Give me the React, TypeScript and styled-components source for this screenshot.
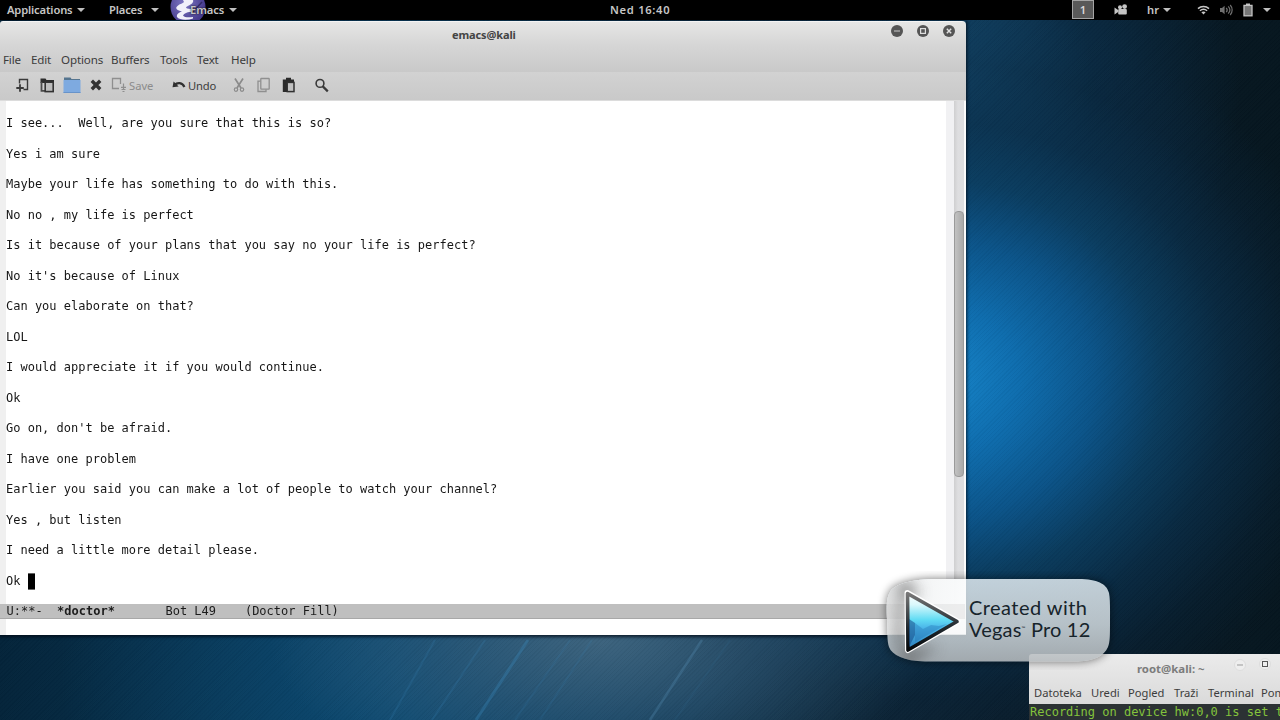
import React from "react";
import styled, { createGlobalStyle } from "styled-components";

const Global = createGlobalStyle`
  * { box-sizing: border-box; }
  body { margin: 0; background: #000; overflow: hidden; }
`;

const UI = `"Noto Sans", "Open Sans", sans-serif`;
const MONO = `"DejaVu Sans Mono", "Liberation Mono", monospace`;

const Screen = styled.div`
  display: flex;
  flex-direction: column;
  width: 1280px;
  height: 720px;
  overflow: hidden;
  font-family: ${UI};
`;

const Slot = styled.span<{ $w: number; $ls?: number }>`
  display: flex;
  flex: none;
  align-items: center;
  width: ${(p) => p.$w}px;
  letter-spacing: ${(p) => p.$ls ?? 0}px;
  white-space: nowrap;
`;

/* ---------- top panel ---------- */
const TopBar = styled.header`
  display: flex;
  flex: none;
  align-items: center;
  height: 20px;
  padding-left: 7px;
  background: #000;
  color: #c6c6c6;
  font-size: 11.2px;
  font-weight: 600;
  line-height: 20px;
`;

const Arrow = styled.i`
  display: block;
  width: 0;
  height: 0;
  margin-bottom: 1px;
  border: 4px solid transparent;
  border-top: 4.5px solid #c0c0c0;
  border-bottom: 0;
`;

const Workspace = styled.span`
  display: grid;
  place-items: center;
  width: 22px;
  height: 19px;
  margin-bottom: 1px;
  border: 1px solid #a5a5a5;
  background: #595959;
  color: #d8d8d8;
  line-height: 16px;
`;

const LogoBox = styled.span`
  flex: none;
  width: 20px;
  height: 20px;
  svg { display: block; overflow: hidden; }
`;

const AppName = styled(Slot)`
  position: relative;
  text-shadow: 0 0 2px #000;
`;

/* ---------- desktop ---------- */
const Desktop = styled.main`
  position: relative;
  flex: 1;
  overflow: hidden;
  background:
    repeating-linear-gradient(135deg, rgba(0, 8, 20, 0.035) 0 1px, rgba(255, 255, 255, 0.006) 1px 3px),
    radial-gradient(ellipse 330px 150px at 600px 620px, rgba(66, 104, 130, 0.9), rgba(50, 92, 122, 0.6) 50%, rgba(40, 85, 115, 0) 100%),
    radial-gradient(ellipse 340px 300px at 400px 650px, rgba(12, 84, 128, 0.6), rgba(8, 70, 112, 0) 100%),
    radial-gradient(ellipse 420px 370px at 935px 360px, #1685ca 0%, #0e6dae 20%, #0b5489 38%, rgba(10, 62, 98, 0.92) 54%, rgba(9, 46, 74, 0.75) 70%, rgba(8, 36, 58, 0.42) 86%, rgba(6, 24, 38, 0) 100%),
    radial-gradient(ellipse 290px 280px at 950px 70px, rgba(20, 82, 124, 0.95), rgba(10, 54, 88, 0.55) 50%, rgba(6, 30, 50, 0) 100%),
    linear-gradient(90deg, #04243a 0, #083452 240px, #0a3f62 400px, #0e2638 850px, #0a1c2a 1000px, #06161f 1280px);
`;

const Rays = styled.svg`
  position: absolute;
  left: 380px;
  top: 615px;
`;

const Window = styled.section<{ $x: number; $y: number; $w: number; $h: number }>`
  position: absolute;
  left: ${(p) => p.$x}px;
  top: ${(p) => p.$y}px;
  display: flex;
  flex-direction: column;
  width: ${(p) => p.$w}px;
  height: ${(p) => p.$h}px;
  overflow: hidden;
  border-radius: 3px 4px 0 0;
`;

const Shade = styled.div`
  position: absolute;
  left: 0;
  top: 1px;
  width: 966px;
  height: 614px;
  box-shadow: 0 1px 3px 1px rgba(0, 10, 20, 0.75);
`;

const WindowHead = styled.div`
  flex: none;
  height: 51px;
  border-top: 1px solid #f4f4f4;
  background: linear-gradient(#e6e6e5, #d6d6d6 45%, #c9c9c9);
`;

const TitleRow = styled.div`
  display: grid;
  grid-template-columns: 1fr auto;
  height: 28px;
`;

const Title = styled.h1`
  margin: 0;
  padding: 3px 0 0 452px;
  color: #444;
  font-size: 11px;
  font-weight: 700;
  letter-spacing: -0.12px;
  line-height: 20px;
`;

const Controls = styled.div`
  display: flex;
  gap: 14px;
  padding: 3px 11px 0 0;
  svg { display: block; }
`;

const MenuRow = styled.nav`
  display: flex;
  height: 20px;
  padding-left: 3px;
  color: #3c3c3c;
  font-size: 11.6px;
  line-height: 20px;
`;

const ToolBar = styled.div`
  display: flex;
  flex: none;
  align-items: center;
  height: 29px;
  padding: 0 0 2px 14px;
  border-bottom: 1px solid #dcdcdc;
  background: linear-gradient(#d2d2d2, #c9c9c9);
  font-size: 11.2px;
  color: #3c3c3c;
  svg { display: block; flex: none; }
`;

const Muted = styled.span`
  color: #8b8b8b;
`;

const Body = styled.div`
  display: flex;
  flex: none;
  height: 503px;
  background: #fff;
`;

const LeftFringe = styled.div`
  width: 6px;
  background: #f0f0f0;
`;

const Buffer = styled.div`
  flex: 1;
  padding-top: 15px;
  background: #fff;
`;

const Line = styled.p`
  display: flex;
  margin: 0 0 15.26px;
  height: 15.27px;
  color: #161616;
  font: 12px/15.27px ${MONO};
  white-space: pre;
  transform: scaleY(1.08);
`;

const Cursor = styled.span`
  width: 7px;
  height: 14.5px;
  background: #000;
`;

const RightFringe = styled.div`
  width: 8px;
  background: #f1f1f3;
`;

const ScrollTrack = styled.div`
  width: 10px;
  padding-top: 110px;
  background: linear-gradient(90deg, #cfcfd0, #dedee0 40%, #dcdcde);
`;

const ScrollThumb = styled.div`
  height: 266px;
  border: 1px solid #9a9a9a;
  border-radius: 4px;
  background: linear-gradient(90deg, #c2c2c2, #a9a9a9);
`;

const WindowEdge = styled.div`
  width: 2px;
  background: #fafafa;
`;

const ModeLine = styled.div`
  display: flex;
  flex: none;
  height: 15px;
  padding-left: 6.5px;
  border-bottom: 1px solid #a8a8a8;
  background: #bfbfbf;
  color: #1c1c1c;
  font: 12px/15px ${MONO};
  white-space: pre;
`;

const ModeText = styled.span`
  height: 14px;
  transform: scaleY(1.08);
`;

const EchoArea = styled.div`
  flex: 1;
  border-left: 6px solid #f0f0f0;
  background: #fff;
`;

/* ---------- terminal ---------- */
const TermHead = styled.div`
  flex: none;
  height: 50px;
  background: linear-gradient(#ebebeb, #dadada);
`;

const TermTitle = styled.div`
  display: flex;
  height: 28px;
  padding-left: 108px;
  color: #7c7c7c;
  font-size: 11.4px;
  font-weight: 700;
  line-height: 27px;
`;

const TermMenu = styled.nav`
  display: flex;
  height: 22px;
  padding-left: 5px;
  color: #3c3c3c;
  font-size: 11.2px;
  line-height: 22px;
`;

const TermBody = styled.div`
  flex: 1;
  padding-left: 1px;
  background: #2c3234;
  color: #84c43c;
  font: 12px/16px ${MONO};
  white-space: pre;
`;

/* ---------- watermark ---------- */
const Watermark = styled.aside`
  position: absolute;
  left: 867px;
  top: 539px;
  width: 263px;
  height: 123px;
`;

const WatermarkArt = styled.svg`
  position: absolute;
  inset: 0;
`;

const WatermarkText = styled.div`
  position: relative;
  display: flex;
  flex-direction: column;
  padding: 37px 0 0 102px;
  color: #17242b;
  font: 400 20px/22px Lato, sans-serif;
  white-space: nowrap;
`;

const WatermarkLine = styled.span<{ $ls: number }>`
  letter-spacing: ${(p) => p.$ls}px;
`;

const Trademark = styled.sup`
  font-size: 5px;
  line-height: 0;
  vertical-align: 7px;
`;

const chat = [
  "I see...  Well, are you sure that this is so?",
  "Yes i am sure",
  "Maybe your life has something to do with this.",
  "No no , my life is perfect",
  "Is it because of your plans that you say no your life is perfect?",
  "No it's because of Linux",
  "Can you elaborate on that?",
  "LOL",
  "I would appreciate it if you would continue.",
  "Ok",
  "Go on, don't be afraid.",
  "I have one problem",
  "Earlier you said you can make a lot of people to watch your channel?",
  "Yes , but listen",
  "I need a little more detail please.",
];

const menus: [string, number][] = [
  ["File", 28], ["Edit", 30], ["Options", 50], ["Buffers", 49],
  ["Tools", 37], ["Text", 34], ["Help", 30],
];

const termMenus: [string, number][] = [
  ["Datoteka", 57], ["Uredi", 37], ["Pogled", 46], ["Traži", 34], ["Terminal", 53], ["Pomoć", 40],
];

const EmacsLogo = () => (
  <svg width="36" height="20" viewBox="0 0 36 20">
    <defs>
      <radialGradient id="em" cx="0.4" cy="0.4" r="0.6">
        <stop offset="0" stopColor="#7f78c4" />
        <stop offset="1" stopColor="#453a8c" />
      </radialGradient>
    </defs>
    <circle cx="18" cy="7" r="17.5" fill="url(#em)" />
    <path d="M13 0h10c1 3-2 4.500-6 6.500-2 1-1 2 4 2.500v3c-5 0-7 2-8 3.500 1 2 6 2 10 1.500v1.500c-6 2-14 1.500-16-1.500-1-3 3-5 5-5.500-5-1-7-3-5-5C9 4 13 3.500 14 2z" fill="#f1f0fa" />
    <path d="M22 13L32 2" stroke="#221c50" strokeWidth="1.5" opacity="0.7" />
  </svg>
);

const Control = ({ kind }: { kind: "min" | "max" | "close" }) => (
  <svg width="12" height="12" viewBox="0 0 12 12">
    <circle cx="6" cy="6" r="6" fill="#555" />
    {kind === "min" && <path d="M3 6h6" stroke="#a5a5a5" strokeWidth="1.3" />}
    {kind === "max" && <rect x="3.6" y="3.6" width="4.8" height="4.8" fill="none" stroke="#ddd" strokeWidth="1.2" />}
    {kind === "close" && <path d="M3.8 3.8l4.4 4.4M8.2 3.8L3.8 8.2" stroke="#e2e2e2" strokeWidth="1.4" />}
  </svg>
);

const NewIcon = () => (
  <svg width="16" height="16" viewBox="0 0 16 16" fill="none" stroke="#3a3a3a">
    <path d="M5.5 6.5V2.5H13.5V12.5H9.5" strokeWidth="1.4" />
    <path d="M2.3 11h7.5M6 7.2v7.5" strokeWidth="1.8" />
  </svg>
);

const OpenIcon = () => (
  <svg width="16" height="16" viewBox="0 0 16 16">
    <path d="M1.5 1.5h5l1 1.5H15V6H1.5z" fill="#2d2d2d" />
    <path d="M2.5 5v8.8h4" fill="none" stroke="#4a4a4a" strokeWidth="1.8" />
    <rect x="6.2" y="5.2" width="8" height="9.4" fill="#bcbcbc" stroke="#333" strokeWidth="1.6" />
  </svg>
);

const FolderIcon = () => (
  <svg width="18" height="16" viewBox="0 0 18 16">
    <path d="M1 0.5h6.5l1 1.5H17V6H1z" fill="#54748f" />
    <rect x="0.5" y="3" width="17" height="13" fill="#7eaae0" />
    <path d="M0.5 15.5h17" stroke="#6893c9" />
  </svg>
);

const CloseIcon = () => (
  <svg width="12" height="12" viewBox="0 0 12 12">
    <path d="M1.8 1.8l8.4 8.4M10.2 1.8l-8.4 8.4" stroke="#333" strokeWidth="3.4" />
  </svg>
);

const SaveIcon = () => (
  <svg width="16" height="16" viewBox="0 0 16 16" fill="none" stroke="#8f8f8f">
    <path d="M8 11.5H1.5V1.5H9.5V7" strokeWidth="1.3" />
    <path d="M12.5 6.5v6M10 10.3h5M10.5 12.5h4M11.5 14.5h2" strokeWidth="1.2" />
  </svg>
);

const UndoIcon = () => (
  <svg width="14" height="12" viewBox="0 0 14 12">
    <path d="M0.5 8.2L1.6 2.4 6.6 7.6z" fill="#303030" />
    <path d="M2.6 6C5 3.2 10.5 3 12.4 8" fill="none" stroke="#303030" strokeWidth="2.2" />
  </svg>
);

const CutIcon = () => (
  <svg width="12" height="16" viewBox="0 0 12 16" fill="none" stroke="#8b8b8b">
    <path d="M2 1.5L8 11M10 1.5L4 11" strokeWidth="1.7" />
    <circle cx="3" cy="12.6" r="1.7" strokeWidth="1.2" />
    <circle cx="9" cy="12.6" r="1.7" strokeWidth="1.2" />
  </svg>
);

const CopyIcon = () => (
  <svg width="14" height="16" viewBox="0 0 14 16" fill="none" stroke="#8f8f8f" strokeWidth="1.3">
    <path d="M3.6 4.2H1v10.3h8v-2" />
    <rect x="3.8" y="1.5" width="8.4" height="10.7" rx="0.5" />
  </svg>
);

const PasteIcon = () => (
  <svg width="14" height="16" viewBox="0 0 14 16">
    <path d="M0.8 2.5H4V0.8h5v1.7h3V6H5v9H0.8z" fill="#2a2a2a" />
    <rect x="5.2" y="5.4" width="6.8" height="9.2" fill="#c0c0c0" stroke="#303030" strokeWidth="1.5" />
  </svg>
);

const SearchIcon = () => (
  <svg width="15" height="15" viewBox="0 0 15 15" fill="none" stroke="#3a3a3a">
    <circle cx="5" cy="5.4" r="3.9" strokeWidth="1.6" />
    <path d="M7.8 8.4l5 5" strokeWidth="2.2" />
  </svg>
);

const CameraIcon = () => (
  <svg width="14" height="12" viewBox="0 0 14 12" fill="#c4c4c4">
    <circle cx="6" cy="3.2" r="2" />
    <circle cx="10.6" cy="2.6" r="2.4" />
    <rect x="4.2" y="5" width="8.6" height="5.4" rx="1" />
    <path d="M0.5 3.6L4.2 6v2L0.5 10.6z" />
  </svg>
);

const WifiIcon = () => (
  <svg width="13" height="12" viewBox="0 0 13 12" fill="none" stroke="#c8c8c8" strokeWidth="1.5">
    <path d="M1 4.6C4 1.8 9 1.8 12 4.6" />
    <path d="M2.9 6.8C5 4.9 8 4.9 10.1 6.8" />
    <path d="M4.4 8.2C5.6 7.1 7.4 7.1 8.6 8.2L6.5 10.4z" fill="#c8c8c8" stroke="none" />
  </svg>
);

const VolumeIcon = () => (
  <svg width="14" height="12" viewBox="0 0 14 12" fill="none" stroke="#6f6f6f" strokeWidth="1.2">
    <path d="M1 4h2l2.6-2.2v8.4L3 8H1z" fill="#6f6f6f" stroke="none" />
    <path d="M7.2 3.8c1.2 1.3 1.2 3.1 0 4.4M9.2 2.4c2 2.1 2 5.1 0 7.2M11.2 1c2.6 2.9 2.6 7.1 0 10" />
  </svg>
);

const BatteryIcon = () => (
  <svg width="10" height="14" viewBox="0 0 10 14">
    <rect x="3" y="0.5" width="4" height="2" fill="#c4c4c4" />
    <rect x="1" y="2.4" width="8" height="10.4" fill="#777" stroke="#c4c4c4" strokeWidth="1.3" />
  </svg>
);

const shell = "M887 620 C886 604 887 597 890 592 C895 583 915 579 935 579 H1082 C1100 580 1107 585 1109 593 C1110.3 600 1110 610 1110 620 C1110 636 1110 642 1108 647 C1104 656 1094 661 1078 661.5 H925 C904 661 892 655 889 647 C887 641 887.5 632 887 620Z";

const WatermarkGraphic = () => (
  <WatermarkArt width="263" height="123" viewBox="867 559 263 123">
    <defs>
      <linearGradient id="glass" x1="0" y1="0" x2="0" y2="1">
        <stop offset="0" stopColor="#dfe9ef" stopOpacity="0.86" />
        <stop offset="0.55" stopColor="#d2dade" stopOpacity="0.86" />
        <stop offset="1" stopColor="#b6bbbe" stopOpacity="0.88" />
      </linearGradient>
      <linearGradient id="whitefade" x1="0" y1="0" x2="1" y2="0.3">
        <stop offset="0" stopColor="#d5d5d5" />
        <stop offset="0.5" stopColor="#f6f6f6" />
        <stop offset="1" stopColor="#fff" />
      </linearGradient>
      <linearGradient id="play" x1="0" y1="0" x2="0" y2="1">
        <stop offset="0" stopColor="#fff" />
        <stop offset="0.2" stopColor="#d9f8fc" />
        <stop offset="0.46" stopColor="#62dcf4" />
        <stop offset="0.6" stopColor="#4cb8ea" />
        <stop offset="1" stopColor="#2a7cba" />
      </linearGradient>
      <linearGradient id="rim" x1="0" y1="0" x2="0" y2="1">
        <stop offset="0" stopColor="#777" />
        <stop offset="0.6" stopColor="#20282e" />
        <stop offset="1" stopColor="#05080a" />
      </linearGradient>
      <filter id="soft" x="-20%" y="-30%" width="140%" height="160%"><feGaussianBlur stdDeviation="5" /></filter>
      <filter id="soft2" x="-40%" y="-40%" width="180%" height="180%"><feGaussianBlur stdDeviation="7" /></filter>
      <clipPath id="inShell"><path d={shell} /></clipPath>
      <mask id="outside"><rect x="867" y="559" width="263" height="123" fill="#fff" /><path d={shell} fill="#000" /></mask>
    </defs>
    <g mask="url(#outside)"><path d={shell} fill="#000" opacity="0.55" filter="url(#soft)" /></g>
    <path d={shell} fill="url(#glass)" />
    <g clipPath="url(#inShell)">
      <rect x="880" y="570" width="86" height="64.5" fill="url(#whitefade)" opacity="0.85" />
      <rect x="880" y="604" width="85" height="15" fill="#c8c8c8" opacity="0.25" />
      <path d="M900 578L922 592 904 600 904 650 940 645 905 670 894 640z" fill="#555" opacity="0.6" filter="url(#soft2)" />
    </g>
    <path d="M907.500 593L957.500 621.500 908 650z" fill="#fff" stroke="#fff" strokeWidth="6" strokeLinejoin="round" />
    <path d="M907.500 593.500L957 621.500 908 650z" fill="url(#play)" stroke="url(#rim)" strokeWidth="3.6" strokeLinejoin="round" />
    <path d="M909 619l6 4v12l-6 12z" fill="#164a86" opacity="0.55" />
    <path d="M915 623l8 6 8-4 8 1 8-2-32 18z" fill="#1f6cae" opacity="0.35" />
  </WatermarkArt>
);

export default function App() {
  return (
    <Screen>
      <Global />
      <TopBar>
        <Slot $w={69.5} $ls={-0.15}>Applications</Slot><Slot $w={32.5}><Arrow /></Slot>
        <Slot $w={41.5} $ls={-0.15}>Places</Slot><Slot $w={19.5}><Arrow /></Slot>
        <LogoBox><EmacsLogo /></LogoBox>
        <AppName $w={38.5} $ls={-0.1}>Emacs</AppName><Slot $w={381.5}><Arrow /></Slot>
        <Slot $w={462} $ls={0.7}>Ned 16:40</Slot>
        <Slot $w={42}><Workspace>1</Workspace></Slot>
        <Slot $w={33}><CameraIcon /></Slot>
        <Slot $w={15.5}>hr</Slot><Slot $w={34.5}><Arrow /></Slot>
        <Slot $w={22}><WifiIcon /></Slot>
        <Slot $w={24}><VolumeIcon /></Slot>
        <Slot $w={20}><BatteryIcon /></Slot>
        <Arrow />
      </TopBar>
      <Desktop>
        <Rays width="520" height="85" fill="none" stroke="#3d8fc4">
          <path d="M55 5L10 85M105 5L52 85" strokeWidth="2" opacity="0.16" />
          <path d="M148 5L96 85" strokeWidth="3" opacity="0.3" />
          <path d="M190 5L135 85M212 5L160 85" strokeWidth="2" opacity="0.12" />
          <path d="M322 5L270 85" strokeWidth="2.5" stroke="#5f9cc4" opacity="0.25" />
          <path d="M350 5L295 85" strokeWidth="2" opacity="0.08" />
        </Rays>
        <Shade />
        <Window $x={0} $y={1} $w={966} $h={614}>
          <WindowHead>
            <TitleRow>
              <Title>emacs@kali</Title>
              <Controls><Control kind="min" /><Control kind="max" /><Control kind="close" /></Controls>
            </TitleRow>
            <MenuRow>
              {menus.map(([t, w]) => <Slot key={t} $w={w} $ls={-0.15}>{t}</Slot>)}
            </MenuRow>
          </WindowHead>
          <ToolBar>
            <Slot $w={25}><NewIcon /></Slot>
            <Slot $w={24}><OpenIcon /></Slot>
            <Slot $w={27}><FolderIcon /></Slot>
            <Slot $w={21}><CloseIcon /></Slot>
            <Slot $w={18}><SaveIcon /></Slot>
            <Slot $w={43}><Muted>Save</Muted></Slot>
            <Slot $w={16}><UndoIcon /></Slot>
            <Slot $w={45} $ls={-0.15}>Undo</Slot>
            <Slot $w={24}><CutIcon /></Slot>
            <Slot $w={25}><CopyIcon /></Slot>
            <Slot $w={33}><PasteIcon /></Slot>
            <SearchIcon />
          </ToolBar>
          <Body>
            <LeftFringe />
            <Buffer>
              {chat.map((t) => <Line key={t}>{t}</Line>)}
              <Line>{"Ok "}<Cursor /></Line>
            </Buffer>
            <RightFringe />
            <ScrollTrack><ScrollThumb /></ScrollTrack>
            <WindowEdge />
          </Body>
          <ModeLine><ModeText>{"U:**-  "}<b>*doctor*</b>{"       Bot L49    (Doctor Fill)"}</ModeText></ModeLine>
          <EchoArea />
        </Window>
        <Window $x={1029} $y={634} $w={260} $h={70}>
          <TermHead>
            <TermTitle>
              <Slot $w={97}>root@kali: ~</Slot>
              <Slot $w={25}>
                <svg width="12" height="18"><circle cx="6" cy="6" r="5.5" fill="#eee" stroke="#ddd" /><path d="M3 6h6" stroke="#999" /></svg>
              </Slot>
              <svg width="12" height="20"><circle cx="6" cy="10" r="5.5" fill="#eee" stroke="#ddd" /><rect x="3.5" y="7.5" width="5" height="5" fill="none" stroke="#555" /></svg>
            </TermTitle>
            <TermMenu>
              {termMenus.map(([t, w]) => <Slot key={t} $w={w}>{t}</Slot>)}
            </TermMenu>
          </TermHead>
          <TermBody>Recording on device hw:0,0 is set to</TermBody>
        </Window>
        <Watermark>
          <WatermarkGraphic />
          <WatermarkText>
            <WatermarkLine $ls={0.45}>Created with</WatermarkLine>
            <WatermarkLine $ls={0.2}>Vegas<Trademark>™</Trademark> Pro 12</WatermarkLine>
          </WatermarkText>
        </Watermark>
      </Desktop>
    </Screen>
  );
}
